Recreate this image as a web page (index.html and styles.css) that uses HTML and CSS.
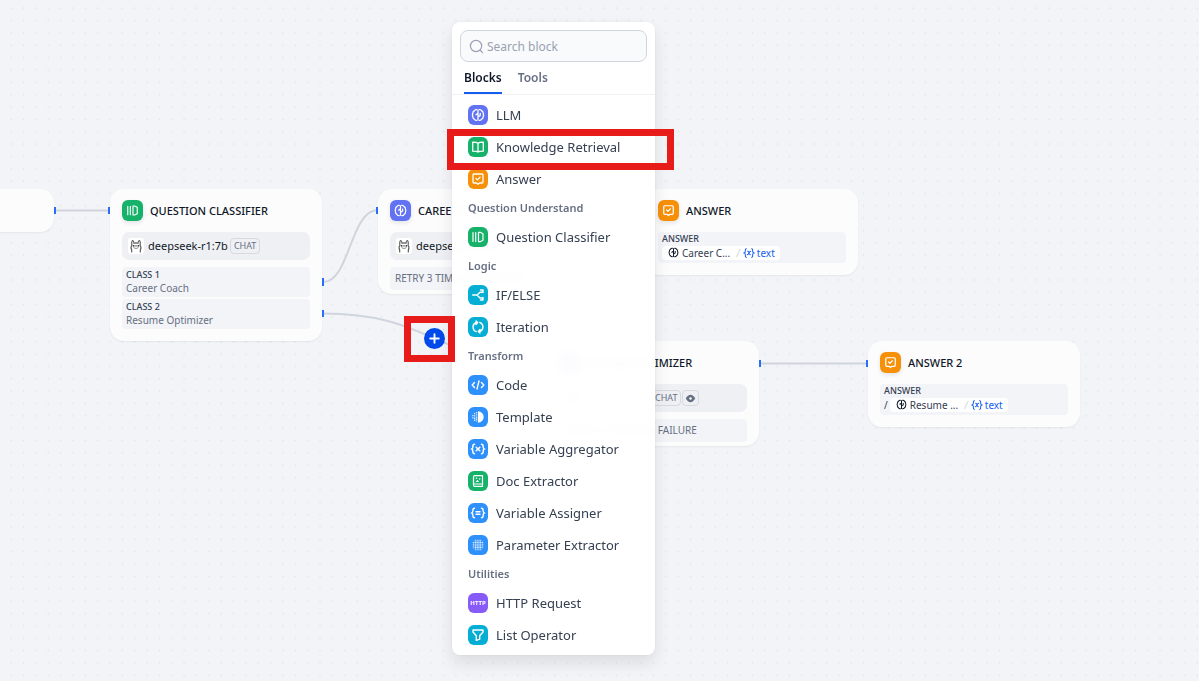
FILE: index.html
```html
<!DOCTYPE html>
<html lang="en">
<head>
<meta charset="utf-8">
<title>Workflow</title>
<link rel="stylesheet" href="styles.css">
</head>
<body>
<svg class="defs" aria-hidden="true">
  <symbol id="i-llm" viewBox="0 0 20 20"><g fill="none" stroke="currentColor" stroke-width="1.3" stroke-linecap="round" stroke-linejoin="round"><path d="M8.700 4.600C7.500 4.500 6.600 5 6.200 5.900C5.200 6.500 4.700 7.400 4.800 8.400C4.300 9.400 4.300 10.600 4.800 11.600C4.700 12.600 5.200 13.500 6.200 14.100C6.600 15 7.500 15.500 8.700 15.400M11.300 4.600C12.500 4.500 13.400 5 13.800 5.900C14.800 6.500 15.300 7.400 15.200 8.400C15.700 9.400 15.700 10.600 15.200 11.600C15.300 12.600 14.800 13.500 13.800 14.100C13.400 15 12.500 15.500 11.300 15.400"/><path d="M10 5V15M10 8.300L7.900 9.700M10 12L12.200 10.500V8.500"/></g></symbol>
  <symbol id="i-book" viewBox="0 0 20 20"><path d="M10 6.200C9 5.300 7.500 5.200 4.700 5.200V14.200C7.500 14.200 9 14.200 10 15C11 14.200 12.500 14.200 15.300 14.200V5.200C12.500 5.200 11 5.300 10 6.200ZM10 6.200V15" fill="none" stroke="currentColor" stroke-width="1.300" stroke-linejoin="round"/></symbol>
  <symbol id="i-answer" viewBox="0 0 20 20"><path d="M6 5H14Q15 5 15 6V13Q15 14 14 14H11.500L10 15.300L8.500 14H6Q5 14 5 13V6Q5 5 6 5ZM8 9.500L9.400 10.900L12 8.200" fill="none" stroke="currentColor" stroke-width="1.300" stroke-linecap="round" stroke-linejoin="round"/></symbol>
  <symbol id="i-class" viewBox="0 0 20 20"><path d="M5 5.500V14.500M7.700 5.500V14.500M10.500 5.300V14.700H12.200L15 13.300V6.700L12.200 5.300Z" fill="none" stroke="currentColor" stroke-width="1.200" stroke-linecap="round" stroke-linejoin="round"/></symbol>
  <symbol id="i-if" viewBox="0 0 20 20"><path d="M4.700 10H9L12 7.200H14.500M9 10L12 13H14.500M12.500 5H15V7.500M12.500 15H15V12.500" fill="none" stroke="currentColor" stroke-width="1.400" stroke-linecap="round" stroke-linejoin="round"/></symbol>
  <symbol id="i-iter" viewBox="0 0 20 20"><path d="M8.300 14.600A4.900 4.900 0 0 1 8 5.500H9.500M11.700 5.400A4.900 4.900 0 0 1 12 14.500H10.500M8 4L9.700 5.500L8 7.500M12 16L10.300 14.500L12 12.500" fill="none" stroke="currentColor" stroke-width="1.400" stroke-linecap="round" stroke-linejoin="round"/></symbol>
  <symbol id="i-code" viewBox="0 0 20 20"><path d="M6.500 7.500L4.200 10L6.500 12.500M13.500 7.500L15.800 10L13.500 12.500M11 6L9 14" fill="none" stroke="currentColor" stroke-width="1.400" stroke-linecap="round" stroke-linejoin="round"/></symbol>
  <symbol id="i-template" viewBox="0 0 20 20"><path d="M10 4.300A5.700 5.700 0 0 1 10 15.700Z" fill="currentColor"/><path d="M8.700 5V15M6.700 6V14M4.900 8V12" stroke="currentColor" stroke-width="1.100" stroke-dasharray="1.100 .6"/></symbol>
  <symbol id="i-vars" viewBox="0 0 20 20"><path d="M6.500 5.300C5 5.300 4.900 6 4.900 7.300S4.700 9.600 3.900 10C4.700 10.400 4.900 11.400 4.900 12.700S5 14.700 6.500 14.700M13.500 5.300C15 5.300 15.100 6 15.100 7.300S15.300 9.600 16.100 10C15.300 10.400 15.100 11.400 15.100 12.700S15 14.700 13.500 14.700M8.200 8.200L11.800 11.800M11.800 8.200L8.200 11.800" fill="none" stroke="currentColor" stroke-width="1.500" stroke-linecap="round"/></symbol>
  <symbol id="i-doc" viewBox="0 0 20 20"><path d="M6.800 4.700H14.500V15.300H6.800Q5.500 15.300 5.500 14V6Q5.500 4.700 6.800 4.700ZM5.500 13H14.500" fill="none" stroke="currentColor" stroke-width="1.200" stroke-linejoin="round"/><path d="M7.500 11L9.500 8.700L11 11ZM11 7L12.700 7.800L11.500 9.300Z" fill="currentColor"/><circle cx="8.500" cy="7.300" r=".8" fill="currentColor"/></symbol>
  <symbol id="i-assign" viewBox="0 0 20 20"><path d="M6.500 5.300C5 5.300 4.900 6 4.900 7.300S4.700 9.600 3.900 10C4.700 10.400 4.900 11.400 4.900 12.700S5 14.700 6.500 14.700M13.500 5.300C15 5.300 15.100 6 15.100 7.300S15.300 9.600 16.100 10C15.300 10.400 15.100 11.400 15.100 12.700S15 14.700 13.500 14.700M8 8.700H12M8 11.300H12" fill="none" stroke="currentColor" stroke-width="1.400" stroke-linecap="round"/></symbol>
  <symbol id="i-param" viewBox="0 0 20 20"><g stroke="currentColor" stroke-linecap="round"><path d="M7.300 7.300H12.800M7.300 9.100H12.800M7.300 10.900H12.800M7.300 12.700H12.800" stroke-width="1.400" stroke-dasharray=".1 1.700"/><path d="M7.300 5.300H12.800M7.300 14.700H12.800M5.300 7.300V12.800M14.700 7.300V12.800" stroke-width="1.100" stroke-dasharray=".1 1.700"/></g></symbol>
  <symbol id="i-filter" viewBox="0 0 20 20"><path d="M5 5H15V7L11.700 10.700V14.200L8.300 15.300V10.700L5 7Z" fill="none" stroke="currentColor" stroke-width="1.400" stroke-linejoin="round"/></symbol>
  <symbol id="i-ollama" viewBox="0 0 16 16"><rect width="16" height="16" rx="3" fill="#fff"/><path d="M3.700 14.500V12C2.900 10.500 3 8.500 3.900 7.500C3.500 5 3.800 2.500 4.700 2.500S5.800 4 6 5.200Q8 4.500 10 5.200C10.200 4 10.400 2.500 11.300 2.500S12.500 5 12.100 7.500C13 8.500 13.100 10.500 12.300 12V14.500" fill="#fff" stroke="#555" stroke-width="1.100"/><ellipse cx="8" cy="9" rx="2.300" ry="1.600" fill="none" stroke="#777" stroke-width=".7"/><circle cx="5.400" cy="7.700" r=".7" fill="#222"/><circle cx="10.600" cy="7.700" r=".7" fill="#222"/><path d="M7.500 8.700L8 9.100L8.500 8.700" stroke="#222" stroke-width=".7" fill="none"/></symbol>
  <symbol id="i-x" viewBox="0 0 14 14"><path d="M4 2C2.500 2 2.800 3 2.800 4.500Q2.800 6.600 1.500 7Q2.800 7.400 2.800 9.500C2.800 11 2.500 12 4 12M10 2C11.500 2 11.200 3 11.200 4.500Q11.200 6.600 12.500 7Q11.200 7.400 11.200 9.500C11.200 11 11.500 12 10 12M5.400 5Q6.500 4.800 7 7T8.700 9M9 5Q7.800 5 7 7T5 9" fill="none" stroke="currentColor" stroke-width="1.200" stroke-linecap="round"/></symbol>
  <symbol id="i-eye" viewBox="0 0 12 12"><path d="M.8 6Q3.200 2 6 2T11.200 6Q8.800 10 6 10T.8 6Z" fill="currentColor"/><circle cx="6" cy="6" r="1.300" fill="#fff"/></symbol>
</svg>

<main class="canvas">
  <svg class="board" aria-hidden="true">
    <defs><pattern id="dots" width="14" height="14" patternUnits="userSpaceOnUse" patternTransform="translate(5 2) scale(.8824)"><circle cx="7" cy="7" r="1"/></pattern></defs>
    <rect width="100%" height="100%" fill="url(#dots)"/>
    <g class="edges">
      <path d="M54 210.500H109"/>
      <path d="M323 282C350 282 350 210 378 210"/>
      <path d="M323 313.500C434 313.500 434 363 547 363"/>
      <path d="M592 210H645"/>
      <path d="M760 363.500H868"/>
    </g>
  </svg>

  <section class="node node-start"></section>

  <section class="node node-classifier">
    <header class="node-head"><span class="icon big green"><svg><use href="#i-class"/></svg></span><h2>QUESTION CLASSIFIER</h2></header>
    <div class="model"><svg class="ollama"><use href="#i-ollama"/></svg><span>deepseek-r1:7b</span><span class="tag">CHAT</span></div>
    <div class="classes">
      <div class="box"><b>CLASS 1</b><p>Career Coach</p></div>
      <div class="box"><b>CLASS 2</b><p>Resume Optimizer</p></div>
    </div>
  </section>

  <section class="node node-career">
    <header class="node-head"><span class="icon big indigo"><svg><use href="#i-llm"/></svg></span><h2>CAREER COACH</h2></header>
    <div class="model"><svg class="ollama"><use href="#i-ollama"/></svg><span>deepseek-r1:7b</span></div>
    <div class="retry">RETRY 3 TIMES ON FAILURE</div>
  </section>

  <section class="node node-answer">
    <header class="node-head"><span class="icon big orange"><svg><use href="#i-answer"/></svg></span><h2>ANSWER</h2></header>
    <div class="box answer"><b>ANSWER</b><p><span class="ref"><svg class="mini" viewBox="3 3 14 14"><use href="#i-llm" width="20" height="20"/></svg>Career C...<i>/</i><em><svg class="var"><use href="#i-x"/></svg>text</em></span></p></div>
  </section>

  <section class="node node-resume">
    <header class="node-head"><span class="icon big indigo"><svg><use href="#i-llm"/></svg></span><h2>RESUME OPTIMIZER</h2></header>
    <div class="model"><svg class="ollama"><use href="#i-ollama"/></svg><span class="model-name"></span><span class="tag">CHAT</span><span class="tag eye"><svg><use href="#i-eye"/></svg></span></div>
    <div class="retry">RETRY 3 TIMES ON FAILURE</div>
  </section>

  <section class="node node-answer2">
    <header class="node-head"><span class="icon big orange"><svg><use href="#i-answer"/></svg></span><h2>ANSWER 2</h2></header>
    <div class="box answer"><b>ANSWER</b><p>/<span class="ref"><svg class="mini" viewBox="3 3 14 14"><use href="#i-llm" width="20" height="20"/></svg>Resume ...<i>/</i><em><svg class="var"><use href="#i-x"/></svg>text</em></span></p></div>
  </section>

  <svg class="board handles" aria-hidden="true">
    <path d="M55 207V214M109 207V214M323 278V286M323 310V317M377 207V214M760 360V367M867 360V367"/>
  </svg>

  <button class="add" aria-label="Add block"><svg viewBox="0 0 22 22"><path d="M11 6.500V15.500M6.500 11H15.500"/></svg></button>

  <aside class="picker">
    <label class="search"><svg viewBox="0 0 16 16" aria-hidden="true"><circle cx="7.500" cy="7.500" r="6"/><path d="M12 12L14.500 14.500"/></svg><input type="text" placeholder="Search block" aria-label="Search block"></label>
    <nav class="tabs"><button class="tab active">Blocks</button><button class="tab">Tools</button></nav>
    <div class="list">
      <button class="item"><span class="icon indigo"><svg><use href="#i-llm"/></svg></span>LLM</button>
      <button class="item"><span class="icon green"><svg><use href="#i-book"/></svg></span>Knowledge Retrieval</button>
      <button class="item"><span class="icon orange"><svg><use href="#i-answer"/></svg></span>Answer</button>
      <h3>Question Understand</h3>
      <button class="item"><span class="icon green"><svg><use href="#i-class"/></svg></span>Question Classifier</button>
      <h3>Logic</h3>
      <button class="item"><span class="icon cyan"><svg><use href="#i-if"/></svg></span>IF/ELSE</button>
      <button class="item"><span class="icon cyan"><svg><use href="#i-iter"/></svg></span>Iteration</button>
      <h3>Transform</h3>
      <button class="item"><span class="icon blue"><svg><use href="#i-code"/></svg></span>Code</button>
      <button class="item"><span class="icon blue"><svg><use href="#i-template"/></svg></span>Template</button>
      <button class="item"><span class="icon blue"><svg><use href="#i-vars"/></svg></span>Variable Aggregator</button>
      <button class="item"><span class="icon green"><svg><use href="#i-doc"/></svg></span>Doc Extractor</button>
      <button class="item"><span class="icon blue"><svg><use href="#i-assign"/></svg></span>Variable Assigner</button>
      <button class="item"><span class="icon blue"><svg><use href="#i-param"/></svg></span>Parameter Extractor</button>
      <h3>Utilities</h3>
      <button class="item"><span class="icon violet">HTTP</span>HTTP Request</button>
      <button class="item"><span class="icon cyan"><svg><use href="#i-filter"/></svg></span>List Operator</button>
    </div>
  </aside>

  <div class="mark mark-item"></div>
  <div class="mark mark-add"></div>
</main>
</body>
</html>
```
FILE: styles.css
```css
* { box-sizing: border-box; }
body { margin: 0; font-family: "Noto Sans", "Open Sans", sans-serif; color: #354052; }
h2, h3, p { margin: 0; }
button { border: 0; padding: 0; background: none; font: inherit; color: inherit; cursor: pointer; }
.defs { position: absolute; width: 0; height: 0; }

.canvas { position: relative; height: 100vh; overflow: hidden; background: #f2f4f7; }
.board { position: absolute; inset: 0; width: 100%; height: 100%; }
#dots circle { fill: #e2e5eb; }
.edges path { fill: none; stroke: #d0d5dd; stroke-width: 2; }
.handles { pointer-events: none; }
.handles path { stroke: #296dff; stroke-width: 2; }

.node { position: absolute; width: 212px; padding-bottom: 4px; border-radius: 14px; background: #fcfcfd; box-shadow: 0 1px 2px rgba(16, 24, 40, .06); }
.node-start { left: -158px; top: 189px; height: 43px; }
.node-classifier { left: 110px; top: 189px; padding-bottom: 12px; }
.node-career { left: 378px; top: 189px; }
.node-answer { left: 646px; top: 189px; padding-bottom: 12px; }
.node-resume { left: 547px; top: 341px; }
.node-answer2 { left: 868px; top: 341px; padding-bottom: 12px; }

.node-head { display: flex; align-items: center; gap: 7px; padding: 11px 12px; }
.node-head h2 { font-size: 11px; line-height: 20px; font-weight: 500; color: #101828; white-space: nowrap; }

.icon { display: flex; flex: none; align-items: center; justify-content: center; width: 20px; height: 20px; border-radius: 6px; color: #fff; font-size: 6px; line-height: 8px; font-weight: 700; }
.icon svg { width: 20px; height: 20px; }
.icon.big { width: 21px; height: 21px; box-shadow: 0 2px 4px rgba(16, 24, 40, .1); }
.icon.big svg { width: 19px; height: 19px; }
.indigo { background: #6172f3; }
.green { background: #17b26a; }
.orange { background: #f79009; }
.cyan { background: #06aed4; }
.blue { background: #2e90fa; }
.violet { background: #875bf7; }

.model { display: flex; align-items: center; gap: 4px; height: 28px; margin: 0 12px 7px; padding: 0 6px; border-radius: 7px; background: #eff0f4; font-size: 11px; line-height: 16px; color: #101828; }
.ollama { flex: none; width: 16px; height: 16px; }
.model-name { width: 64px; }
.tag { height: 16px; margin-left: -2px; padding: 0 3px; border: 1px solid #d5d9e0; border-radius: 4px; font-size: 9px; line-height: 14px; color: #676f83; }
.tag.eye { display: flex; align-items: center; margin-left: -3px; padding: 0 2px; }
.eye svg { width: 11px; height: 11px; }

.classes { display: grid; gap: 2px; }
.box { margin: 0 12px; padding: 0 4px; border-radius: 4px; background: #f2f4f7; }
.box b { display: block; font-size: 9px; line-height: 15px; font-weight: 500; color: #354052; }
.box p { font-size: 10px; line-height: 12px; padding-bottom: 3px; color: #676f83; }
.box.answer { padding-bottom: 4px; }
.box.answer b { line-height: 14px; }
.answer p { display: flex; align-items: center; gap: 2px; height: 13px; padding: 0; color: #354052; }
.ref { display: flex; align-items: center; height: 14px; padding: 0 5px; border-radius: 4px; background: #fff; white-space: nowrap; }
.ref i { padding: 0 3px 0 6px; color: #d0d5dd; }
.ref em { display: flex; align-items: center; color: #155eef; font-style: normal; }
.mini { width: 11px; height: 11px; margin: 0 3px 0 1px; color: #101828; }
.var { width: 12px; height: 12px; margin-right: 2px; }
.var use { width: 12px; height: 12px; }
.retry { margin: 0 12px; padding: 0 5px; border-radius: 4px; background: #f2f4f7; font-size: 10px; line-height: 23px; color: #676f83; white-space: nowrap; }
.node-resume .retry { padding: 0 9px; }

.add { position: absolute; left: 424px; top: 328px; width: 21px; height: 21px; border-radius: 50%; background: #004aeb; }
.add svg { display: block; width: 21px; height: 21px; fill: none; stroke: #fff; stroke-width: 2; stroke-linecap: round; }

.picker { position: absolute; left: 452px; top: 22px; width: 203px; padding-bottom: 4px; border-radius: 8px; background: rgba(255, 255, 255, .97); backdrop-filter: blur(5px); box-shadow: 0 0 1px rgba(16, 24, 40, .2), 0 8px 16px rgba(16, 24, 40, .1); }
.search { display: flex; align-items: center; gap: 3px; height: 32px; margin: 8px 8px 0; padding: 1px 8px 0; border: 1px solid #d0d5dd; border-radius: 8px; background: #f9fafb; }
.search svg { flex: none; width: 15px; height: 15px; fill: none; stroke: #98a2b3; stroke-width: 1.3; stroke-linecap: round; }
.search input { width: 100%; min-width: 0; padding: 0; border: 0; outline: 0; background: none; font: inherit; font-size: 12px; line-height: 18px; color: #354052; }
.search input::placeholder { color: #98a2b3; opacity: 1; }
.tabs { display: flex; gap: 16px; height: 33px; padding: 0 12px; border-bottom: 1px solid #f0f1f4; }
.tab { height: 32px; padding-top: 2px; border-bottom: 2px solid transparent; font-size: 12px; line-height: 18px; font-weight: 600; color: #676f83; }
.tab.active { border-bottom-color: #155eef; color: #101828; }
.list { padding-top: 4px; }
.item { display: flex; align-items: center; gap: 8px; width: 100%; height: 32px; padding: 0 16px; font-size: 13px; line-height: 20px; text-align: left; white-space: nowrap; }
.list h3 { padding: 0 16px; font-size: 11px; line-height: 26px; font-weight: 600; color: #676f83; }

.mark { position: absolute; border: 7px solid #e81b1b; pointer-events: none; }
.mark-item { left: 447px; top: 129px; width: 227px; height: 41px; }
.mark-add { left: 404px; top: 316px; width: 51px; height: 46px; }
```
